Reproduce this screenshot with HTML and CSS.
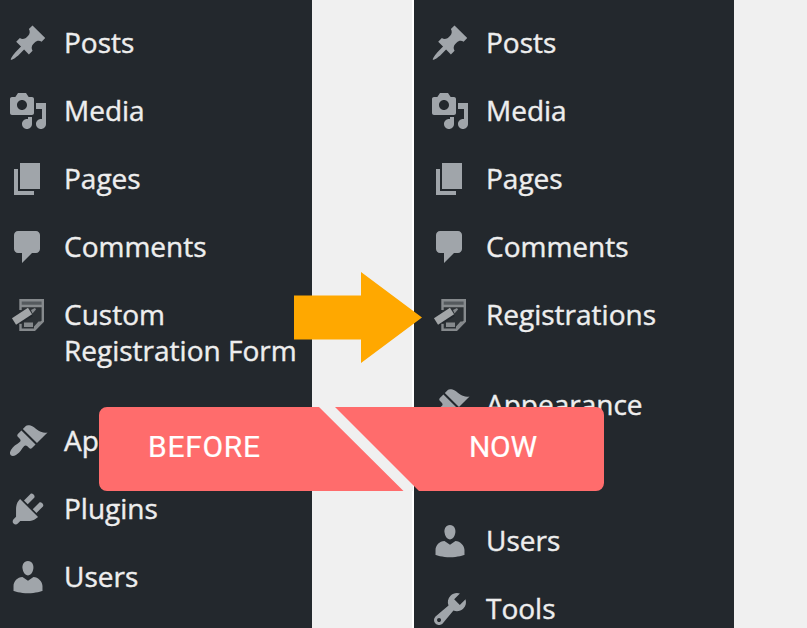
FILE: index.html
```html
<!DOCTYPE html>
<html lang="en">
<head>
<meta charset="utf-8">
<title>Admin menu: before and now</title>
<link rel="stylesheet" href="styles.css">
</head>
<body>
<svg class="defs" aria-hidden="true">
<symbol id="post" viewBox="0 0 20 20"><path d="M10.44 3.02l1.82-1.82 6.36 6.35-1.83 1.82c-1.05-.68-2.48-.57-3.41.36l-.75.75c-.92.93-1.04 2.35-.35 3.41l-1.83 1.82-2.41-2.41-2.8 2.79c-.42.42-3.38 2.71-3.8 2.29s1.86-3.39 2.28-3.81l2.79-2.79L4.1 9.36l1.83-1.82c1.05.69 2.48.57 3.4-.36l.75-.75c.93-.92 1.05-2.35.36-3.41z"/></symbol>
<symbol id="media" viewBox="0 0 20 20"><path d="M13 11V4c0-.55-.45-1-1-1h-1.67L9 1H5L3.67 3H2c-.55 0-1 .45-1 1v7c0 .55.45 1 1 1h10c.55 0 1-.45 1-1zM7 4.5c1.38 0 2.5 1.12 2.5 2.5S8.38 9.5 7 9.5 4.5 8.38 4.5 7 5.62 4.5 7 4.5zM14 6h5v10.5c0 1.38-1.12 2.5-2.5 2.5S14 17.88 14 16.5s1.12-2.5 2.5-2.5c.17 0 .34.02.5.05V9h-3V6zm-4 8.05V13h2v3.5c0 1.38-1.12 2.5-2.5 2.5S7 17.88 7 16.5 8.12 14 9.5 14c.17 0 .34.02.5.05z"/></symbol>
<symbol id="page" viewBox="0 0 20 20"><path d="M6 15V2h10v13H6zm-1 1h8v2H3V5h2v11z"/></symbol>
<symbol id="comment" viewBox="0 0 20 20"><path d="M5 2h9c1.1 0 2 .9 2 2v7c0 1.1-.9 2-2 2h-2l-5 5v-5H5c-1.1 0-2-.9-2-2V4c0-1.1.9-2 2-2z"/></symbol>
<symbol id="form" viewBox="0 0 40 40"><path fill="#2c3135" d="M12 5h23v22l-7 8H12z"/><path fill="#555a5e" d="M12 5h23v6H12z"/><path fill="none" stroke="#868a8d" stroke-width="2.4" d="M12.500 15V5.200h22.300v21l-8.300 8.600H12.500v-6M13 11h21"/><path stroke="#23282d" stroke-width="10" d="M10 24.500L22 17"/><path stroke="#a3a6a8" stroke-width="7.500" d="M6 26.500L22 16"/><path fill="#85898c" d="M23 15l4-2 1 1.500-3.500 4zM16 27.500h9v4.500h-9zM26 34.500v-3l4.500-5h5z"/></symbol>
<symbol id="appearance" viewBox="0 0 20 20"><path d="M14.48 11.06L7.41 3.99l1.5-1.5c.5-.56 2.3-.47 3.51.32 1.21.8 1.43 1.28 2.91 2.1 1.18.64 2.45 1.26 4.45.85zm-.71.71L6.7 4.7 4.93 6.47c-.39.39-.39 1.02 0 1.41l1.06 1.06c.39.39.39 1.03 0 1.42-.6.6-1.43 1.11-2.21 1.69-.35.26-.7.53-1.01.84C1.43 14.23.4 16.08 1.4 17.07c.99 1 2.84-.03 4.18-1.36.31-.31.58-.66.85-1.02.57-.78 1.08-1.61 1.69-2.21.39-.39 1.02-.39 1.41 0l1.06 1.06c.39.39 1.02.39 1.41 0z"/></symbol>
<symbol id="plugin" viewBox="0 0 20 20"><path d="M13.11 4.36L9.87 7.6 8 5.73l3.24-3.24c.35-.34 1.05-.2 1.56.32.52.51.66 1.21.31 1.55zm-8 1.77l.91-1.12 9.01 9.01-1.19.84c-.71.71-2.63 1.16-3.82 1.16H6.14L4.9 17.26c-.59.59-1.54.59-2.12 0-.59-.58-.59-1.53 0-2.12l1.24-1.24v-3.88c0-1.13.4-3.19 1.09-3.89zm7.26 3.97l3.24-3.24c.34-.35 1.04-.21 1.55.31.52.51.66 1.21.31 1.55l-3.24 3.25z"/></symbol>
<symbol id="user" viewBox="0 0 20 20"><path d="M10 9.25c-2.27 0-2.73-3.44-2.73-3.44C7 4.02 7.82 2 9.97 2c2.16 0 2.98 2.02 2.71 3.81 0 0-.41 3.44-2.68 3.44zm0 2.57L12.72 10c2.39 0 4.52 2.33 4.52 4.53v2.49s-3.65 1.13-7.24 1.13c-3.65 0-7.24-1.13-7.24-1.13v-2.49c0-2.25 1.94-4.48 4.47-4.48z"/></symbol>
<symbol id="tool" viewBox="0 0 20 20"><path d="M16.68 9.77c-1.34 1.34-3.3 1.67-4.95.99l-5.41 6.52c-.99.99-2.59.99-3.58 0s-.99-2.59 0-3.57l6.52-5.42c-.68-1.65-.35-3.61.99-4.95 1.28-1.28 3.12-1.62 4.72-1.06l-2.89 2.89 2.82 2.82 2.86-2.87c.53 1.58.18 3.39-1.08 4.65zM3.81 16.21c.4.39 1.04.39 1.43 0 .4-.4.4-1.04 0-1.43-.39-.4-1.03-.4-1.43 0-.39.39-.39 1.03 0 1.43z"/></symbol>
</svg>
<main class="compare">
  <nav class="menu">
    <a class="item"><svg class="icon"><use href="#post"/></svg><span class="text">Posts</span></a>
    <a class="item"><svg class="icon"><use href="#media"/></svg><span class="text">Media</span></a>
    <a class="item"><svg class="icon"><use href="#page"/></svg><span class="text">Pages</span></a>
    <a class="item"><svg class="icon"><use href="#comment"/></svg><span class="text">Comments</span></a>
    <a class="item group-end"><svg class="icon soft"><use href="#form"/></svg><span class="text">Custom<br>Registration Form</span></a>
    <a class="item"><svg class="icon"><use href="#appearance"/></svg><span class="text">Ap</span></a>
    <a class="item"><svg class="icon"><use href="#plugin"/></svg><span class="text">Plugins</span></a>
    <a class="item"><svg class="icon"><use href="#user"/></svg><span class="text">Users</span></a>
  </nav>
  <div class="gutter"></div>
  <nav class="menu now">
    <a class="item"><svg class="icon"><use href="#post"/></svg><span class="text">Posts</span></a>
    <a class="item"><svg class="icon"><use href="#media"/></svg><span class="text">Media</span></a>
    <a class="item"><svg class="icon"><use href="#page"/></svg><span class="text">Pages</span></a>
    <a class="item"><svg class="icon"><use href="#comment"/></svg><span class="text">Comments</span></a>
    <a class="item group-end"><svg class="icon soft"><use href="#form"/></svg><span class="text">Registrations</span></a>
    <a class="item hidden-gap"><svg class="icon"><use href="#appearance"/></svg><span class="text">Appearance</span></a>
    <a class="item"><svg class="icon"><use href="#user"/></svg><span class="text">Users</span></a>
    <a class="item"><svg class="icon"><use href="#tool"/></svg><span class="text">Tools</span></a>
  </nav>
  <svg class="arrow" viewBox="0 0 128 91"><path d="M0 23.5H67V0L128 45.5 67 91V67.5H0z"/></svg>
  <div class="banner">
    <svg class="banner-shape" viewBox="0 0 505 84"><path class="gap" d="M220 0h17l77 77v7h-10z"/><path d="M8 0H220L304.5 84H8a8 8 0 0 1-8-8V8a8 8 0 0 1 8-8zM236 0H497a8 8 0 0 1 8 8V76a8 8 0 0 1-8 8H320z"/></svg>
    <span class="label before">BEFORE</span>
    <span class="label after">NOW</span>
  </div>
</main>
</body>
</html>
```

FILE: styles.css
```css
body { margin: 0; background: #f0f0f0; }
.defs { position: absolute; width: 0; height: 0; }
.compare {
  position: relative;
  display: flex;
  width: 807px;
  height: 628px;
  overflow: hidden;
  font: 28px/36px "Open Sans", sans-serif;
}
.menu {
  flex: none;
  box-sizing: border-box;
  width: 312px;
  height: 640px;
  padding-top: 9px;
  background: #23282d;
  color: #eee;
}
.menu.now { width: 320px; padding-left: 8px; }
.gutter { box-sizing: border-box; width: 102px; border-right: 2px solid #fff; }
.item { display: flex; gap: 16px; padding: 16px 0 16px 8px; white-space: nowrap; }
.text { margin: -1px 0 1px; -webkit-text-stroke: 0.4px #eee; }
.group-end { margin-bottom: 22px; }
.hidden-gap { margin-bottom: 68px; }
.icon { flex: none; width: 40px; height: 40px; margin: -2px 0; fill: #a0a5aa; }
.soft { filter: blur(0.7px); }
.arrow { position: absolute; left: 294px; top: 272px; width: 128px; height: 91px; fill: #ffa800; }
.banner {
  position: absolute;
  left: 99px;
  top: 407px;
  width: 505px;
  height: 84px;
  color: #fff;
  font: 30px/80px Roboto, sans-serif;
}
.banner-shape { display: block; width: 505px; height: 84px; fill: #ff6c6c; }
.banner-shape .gap { fill: #f0f0f0; }
.label { position: absolute; top: 0; -webkit-text-stroke: 0.2px #fff; }
.before { left: 49px; letter-spacing: 0.7px; }
.after { left: 370px; letter-spacing: -0.3px; }
```
